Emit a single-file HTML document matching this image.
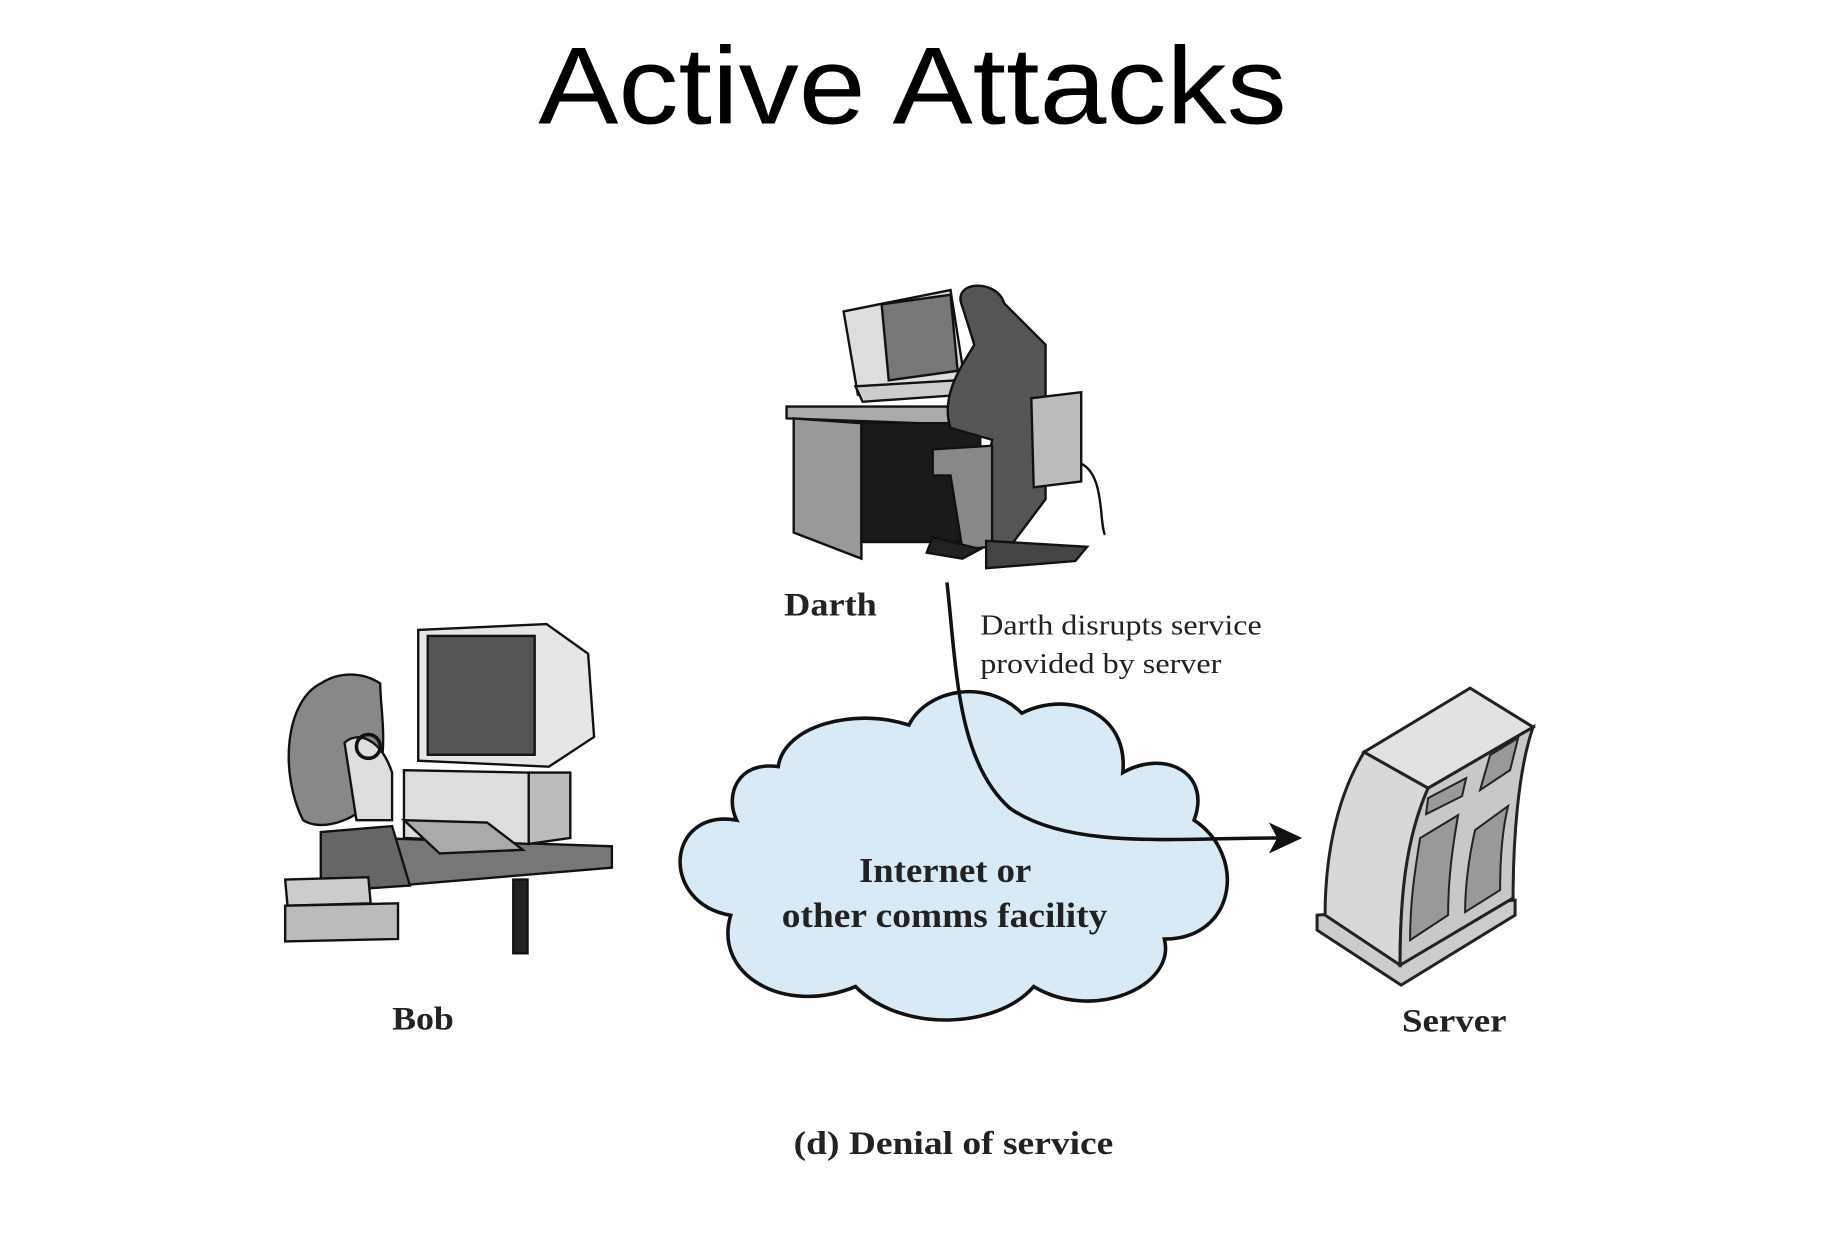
<!DOCTYPE html>
<html><head><meta charset="utf-8"><style>
html,body{margin:0;padding:0;background:#fff;width:1844px;height:1254px;overflow:hidden}
svg{display:block}
.s{font-family:"Liberation Serif",serif;font-weight:bold;fill:#222}
</style></head><body>
<svg width="1844" height="1254" viewBox="0 0 1552 1055" preserveAspectRatio="none" xmlns="http://www.w3.org/2000/svg">
<text x="768" y="104" text-anchor="middle" font-family="'Liberation Sans',sans-serif" font-size="92" textLength="630" lengthAdjust="spacingAndGlyphs" fill="#000">Active Attacks</text>

<!-- Cloud -->
<path d="M620,690 C560,680 555,760 615,770 C600,820 660,855 720,830 C760,870 840,865 870,830 C920,860 990,830 980,790 C1040,790 1050,720 1005,690 C1020,650 980,630 945,650 C950,600 900,580 860,600 C830,570 780,580 765,610 C720,595 660,610 655,645 C620,640 610,670 620,690 Z" fill="#d9eaf7" stroke="#111" stroke-width="3"/>
<path d="M797,490 C805,560 805,640 850,680 C900,715 990,705 1075,705" fill="none" stroke="#111" stroke-width="3"/>
<path d="M1096,705 L1068,692 L1075,705 L1068,718 Z" fill="#111"/>

<text class="s" x="723" y="742" font-size="29" textLength="145" lengthAdjust="spacingAndGlyphs">Internet or</text>
<text class="s" x="658" y="780" font-size="29" textLength="274" lengthAdjust="spacingAndGlyphs">other comms facility</text>
<text class="s" x="660" y="518" font-size="28" textLength="78" lengthAdjust="spacingAndGlyphs">Darth</text>
<text x="825" y="534" font-family="'Liberation Serif',serif" font-size="24" fill="#222" textLength="237" lengthAdjust="spacingAndGlyphs">Darth disrupts service</text>
<text x="825" y="566" font-family="'Liberation Serif',serif" font-size="24" fill="#222" textLength="203" lengthAdjust="spacingAndGlyphs">provided by server</text>
<text class="s" x="330" y="866" font-size="28" textLength="52" lengthAdjust="spacingAndGlyphs">Bob</text>
<text class="s" x="1180" y="868" font-size="28" textLength="88" lengthAdjust="spacingAndGlyphs">Server</text>
<text class="s" x="668" y="971" font-size="28" textLength="269" lengthAdjust="spacingAndGlyphs">(d) Denial of service</text>

<!-- Darth scene -->
<g stroke="#111" stroke-width="2">
<path d="M662,342 L830,342 L830,358 L662,352 Z" fill="#aaa"/>
<path d="M668,352 L725,356 L725,470 L668,448 Z" fill="#999"/>
<rect x="725" y="356" width="100" height="100" fill="#1a1a1a"/>
<path d="M710,262 L800,244 L812,320 L722,332 Z" fill="#ddd"/>
<path d="M742,256 L800,248 L806,312 L748,320 Z" fill="#777"/>
<path d="M720,325 L805,320 L812,332 L726,338 Z" fill="#ccc"/>
<path d="M810,258 C800,235 840,235 845,255 L880,290 L880,420 L850,460 L820,455 L835,370 L800,360 C790,330 815,300 820,290 Z" fill="#555"/>
<path d="M868,335 L910,330 L910,405 L870,410 Z" fill="#bbb"/>
<path d="M785,378 L835,375 L835,460 L810,462 L800,400 L785,400 Z" fill="#888"/>
<path d="M785,452 L825,462 L810,470 L780,465 Z" fill="#222"/>
<path d="M830,455 L915,460 L905,472 L830,478 Z" fill="#444"/>
<path d="M910,390 C930,400 925,440 930,450" fill="none"/>
</g>

<!-- Bob scene -->
<g stroke="#111" stroke-width="2">
<path d="M315,705 L515,712 L515,730 L335,745 L310,725 Z" fill="#777"/>
<rect x="432" y="740" width="12" height="62" fill="#222"/>
<path d="M352,530 L460,525 L495,550 L500,620 L462,645 L352,640 Z" fill="#e6e6e6"/>
<rect x="360" y="535" width="90" height="100" fill="#555"/>
<path d="M340,648 L445,650 L445,710 L340,705 Z" fill="#ddd"/>
<path d="M445,650 L480,650 L480,705 L445,710 Z" fill="#bbb"/>
<path d="M340,690 L410,692 L440,715 L370,718 Z" fill="#aaa"/>
<path d="M270,575 C240,590 235,650 255,690 C270,700 300,690 310,675 C330,640 320,600 320,575 C305,565 285,565 270,575 Z" fill="#888"/>
<path d="M290,625 C300,615 320,620 330,650 L330,690 L300,690 Z" fill="#ddd"/>
<path d="M270,700 L330,695 L345,745 L270,750 Z" fill="#666"/>
<path d="M240,740 L310,738 L312,760 L242,762 Z" fill="#ccc"/>
<path d="M240,762 L335,760 L335,790 L240,792 Z" fill="#bbb"/>
<circle cx="310" cy="628" r="10" fill="none" stroke-width="3"/>
</g>

<!-- Server -->
<g transform="scale(0.8417 0.8414)" stroke="#222" stroke-width="3">
<path d="M1317,915 L1317,930 L1401,985 L1515,915 L1515,900 Z" fill="#ccc"/>
<path d="M1364,752 C1335,800 1325,860 1325,915 L1400,965 C1400,900 1405,840 1428,788 Z" fill="#d8d8d8"/>
<path d="M1428,788 C1405,840 1400,900 1400,965 L1513,898 C1513,840 1518,770 1533,727 Z" fill="#c8c8c8"/>
<path d="M1364,752 L1470,688 L1533,727 L1428,788 Z" fill="#e2e2e2"/>
<path d="M1420,838 C1415,870 1410,900 1410,940 L1448,915 C1448,880 1452,850 1458,815 Z" fill="#999" stroke-width="2"/>
<path d="M1475,830 C1468,860 1465,890 1465,912 L1500,890 C1500,860 1502,830 1508,806 Z" fill="#999" stroke-width="2"/>
<path d="M1428,798 L1466,778 L1462,796 L1426,814 Z" fill="#999" stroke-width="2"/>
<path d="M1490,755 L1518,738 L1510,770 L1480,790 Z" fill="#999" stroke-width="2"/>
</g>
</svg>
</body></html>
